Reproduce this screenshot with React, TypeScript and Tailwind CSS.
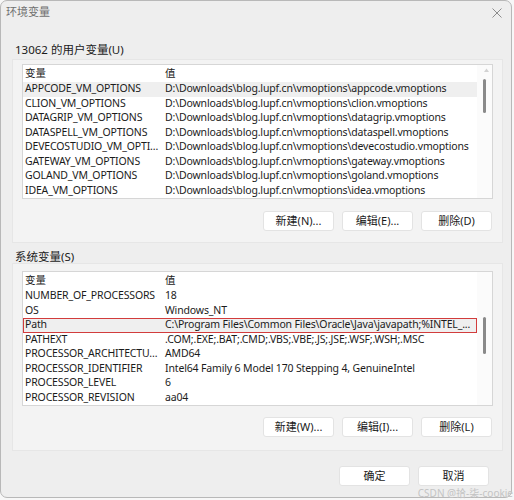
import React from "react";

const userVars: [string, string][] = [
  ["APPCODE_VM_OPTIONS", "D:\\Downloads\\blog.lupf.cn\\vmoptions\\appcode.vmoptions"],
  ["CLION_VM_OPTIONS", "D:\\Downloads\\blog.lupf.cn\\vmoptions\\clion.vmoptions"],
  ["DATAGRIP_VM_OPTIONS", "D:\\Downloads\\blog.lupf.cn\\vmoptions\\datagrip.vmoptions"],
  ["DATASPELL_VM_OPTIONS", "D:\\Downloads\\blog.lupf.cn\\vmoptions\\dataspell.vmoptions"],
  ["DEVECOSTUDIO_VM_OPTI...", "D:\\Downloads\\blog.lupf.cn\\vmoptions\\devecostudio.vmoptions"],
  ["GATEWAY_VM_OPTIONS", "D:\\Downloads\\blog.lupf.cn\\vmoptions\\gateway.vmoptions"],
  ["GOLAND_VM_OPTIONS", "D:\\Downloads\\blog.lupf.cn\\vmoptions\\goland.vmoptions"],
  ["IDEA_VM_OPTIONS", "D:\\Downloads\\blog.lupf.cn\\vmoptions\\idea.vmoptions"],
];

const sysVars: [string, string][] = [
  ["NUMBER_OF_PROCESSORS", "18"],
  ["OS", "Windows_NT"],
  ["Path", "C:\\Program Files\\Common Files\\Oracle\\Java\\javapath;%INTEL_..."],
  ["PATHEXT", ".COM;.EXE;.BAT;.CMD;.VBS;.VBE;.JS;.JSE;.WSF;.WSH;.MSC"],
  ["PROCESSOR_ARCHITECTU...", "AMD64"],
  ["PROCESSOR_IDENTIFIER", "Intel64 Family 6 Model 170 Stepping 4, GenuineIntel"],
  ["PROCESSOR_LEVEL", "6"],
  ["PROCESSOR_REVISION", "aa04"],
];

const Button = ({ label }: { label: string }) => (
  <div className="w-[71px] h-[20px] flex items-center justify-center bg-white border border-[#e3e3e3] rounded-[3px] text-[11px] text-[#1b1b1b]">
    {label}
  </div>
);

const UserList = () => (
  <div className="w-[471px] h-[135px] flex bg-white border border-[#d6d6d6]">
    <div className="flex-1 min-w-0 overflow-hidden flex flex-col">
      <div className="h-[17px] flex items-center text-[10.5px] text-[#1b1b1b]">
        <span className="w-[142px] shrink-0 pl-[2px]">变量</span>
        <span>值</span>
      </div>
      {userVars.map(([k, v], i) => (
        <div
          key={k}
          className={`h-[14.5px] flex items-center text-[10.5px] tracking-[-0.15px] text-[#1b1b1b] whitespace-nowrap ${i === 0 ? "bg-[#efefef]" : ""}`}
        >
          <span className="w-[142px] shrink-0 pl-[2px]">{k}</span>
          <span>{v}</span>
        </div>
      ))}
    </div>
    <div className="w-[15px] shrink-0 flex flex-col items-start pl-[6px] pt-[3px] bg-[#fbfbfb]">
      <svg width="5" height="4" viewBox="0 0 5 4" className="ml-[1px]">
        <path d="M0 4 L2.5 0.5 L5 4 Z" fill="#d2d2d2" />
      </svg>
      <div className="mt-[7px] w-[3px] h-[34px] rounded-full bg-[#8a8a8a]" />
    </div>
  </div>
);

const SysList = () => (
  <div className="w-[471px] h-[135px] flex bg-white border border-[#d6d6d6]">
    <div className="flex-1 min-w-0 overflow-hidden flex flex-col">
      <div className="h-[17px] flex items-center text-[10.5px] text-[#1b1b1b]">
        <span className="w-[142px] shrink-0 pl-[2px]">变量</span>
        <span>值</span>
      </div>
      {sysVars.map(([k, v], i) => (
        <div
          key={k}
          className={`h-[14.5px] flex items-center text-[10.5px] tracking-[-0.15px] text-[#1b1b1b] whitespace-nowrap ${i === 2 ? "bg-[#efefef] outline-[1.5px] outline-solid outline-[#d23c3c] -outline-offset-1" : ""}`}
        >
          <span className="w-[142px] shrink-0 pl-[2px]">{k}</span>
          <span>{v}</span>
        </div>
      ))}
    </div>
    <div className="w-[15px] shrink-0 flex flex-col items-start pl-[6px] pt-[45px] bg-[#fbfbfb]">
      <div className="w-[3px] h-[37px] rounded-full bg-[#8a8a8a]" />
    </div>
  </div>
);

export default function App() {
  return (
    <div className="relative w-[514px] h-[500px] bg-[#f7f7f7] font-['Noto_Sans','Noto_Sans_CJK_SC',sans-serif]">
      <div className="w-[512px] h-[498px] flex flex-col bg-[#eeeeee] border border-[#b8b8b8] rounded-[7px] overflow-hidden">
        {/* Title bar */}
        <div className="h-[23px] flex items-center justify-between pl-[5px] pr-[9px]">
          <span className="text-[11px] text-[#707070]">环境变量</span>
          <svg width="10" height="10" viewBox="0 0 10 10">
            <path d="M0.5 0.5 L9.5 9.5 M9.5 0.5 L0.5 9.5" stroke="#8c8c8c" strokeWidth="1" />
          </svg>
        </div>

        {/* User vars */}
        <div className="mt-[20px] ml-[14px] h-[12px] leading-[12px] text-[11.5px] text-[#1b1b1b]">13062 的用户变量(U)</div>
        <div className="mt-[3px] ml-[11px] w-[491px] h-[184px] flex flex-col bg-[#f3f3f3] border border-[#e6e6e6] pt-[4px] pl-[9px]">
          <UserList />
          <div className="mt-[12px] flex justify-end gap-[8px] pr-[10px]">
            <Button label="新建(N)..." />
            <Button label="编辑(E)..." />
            <Button label="删除(D)" />
          </div>
        </div>

        {/* System vars */}
        <div className="mt-[8px] ml-[14px] h-[12px] leading-[12px] text-[11.5px] text-[#1b1b1b]">系统变量(S)</div>
        <div className="ml-[11px] w-[491px] h-[188px] flex flex-col bg-[#f3f3f3] border border-[#e6e6e6] pt-[7px] pl-[9px]">
          <SysList />
          <div className="mt-[11px] flex justify-end gap-[8px] pr-[10px]">
            <Button label="新建(W)..." />
            <Button label="编辑(I)..." />
            <Button label="删除(L)" />
          </div>
        </div>

        {/* Dialog buttons */}
        <div className="mt-[15px] flex justify-end gap-[8px] pr-[22px]">
          <Button label="确定" />
          <Button label="取消" />
        </div>
      </div>
      <span className="absolute right-[1px] bottom-[2px] text-[10px] leading-[10px] text-[#c4c4c4]">CSDN @拾-柒-cookie</span>
    </div>
  );
}
